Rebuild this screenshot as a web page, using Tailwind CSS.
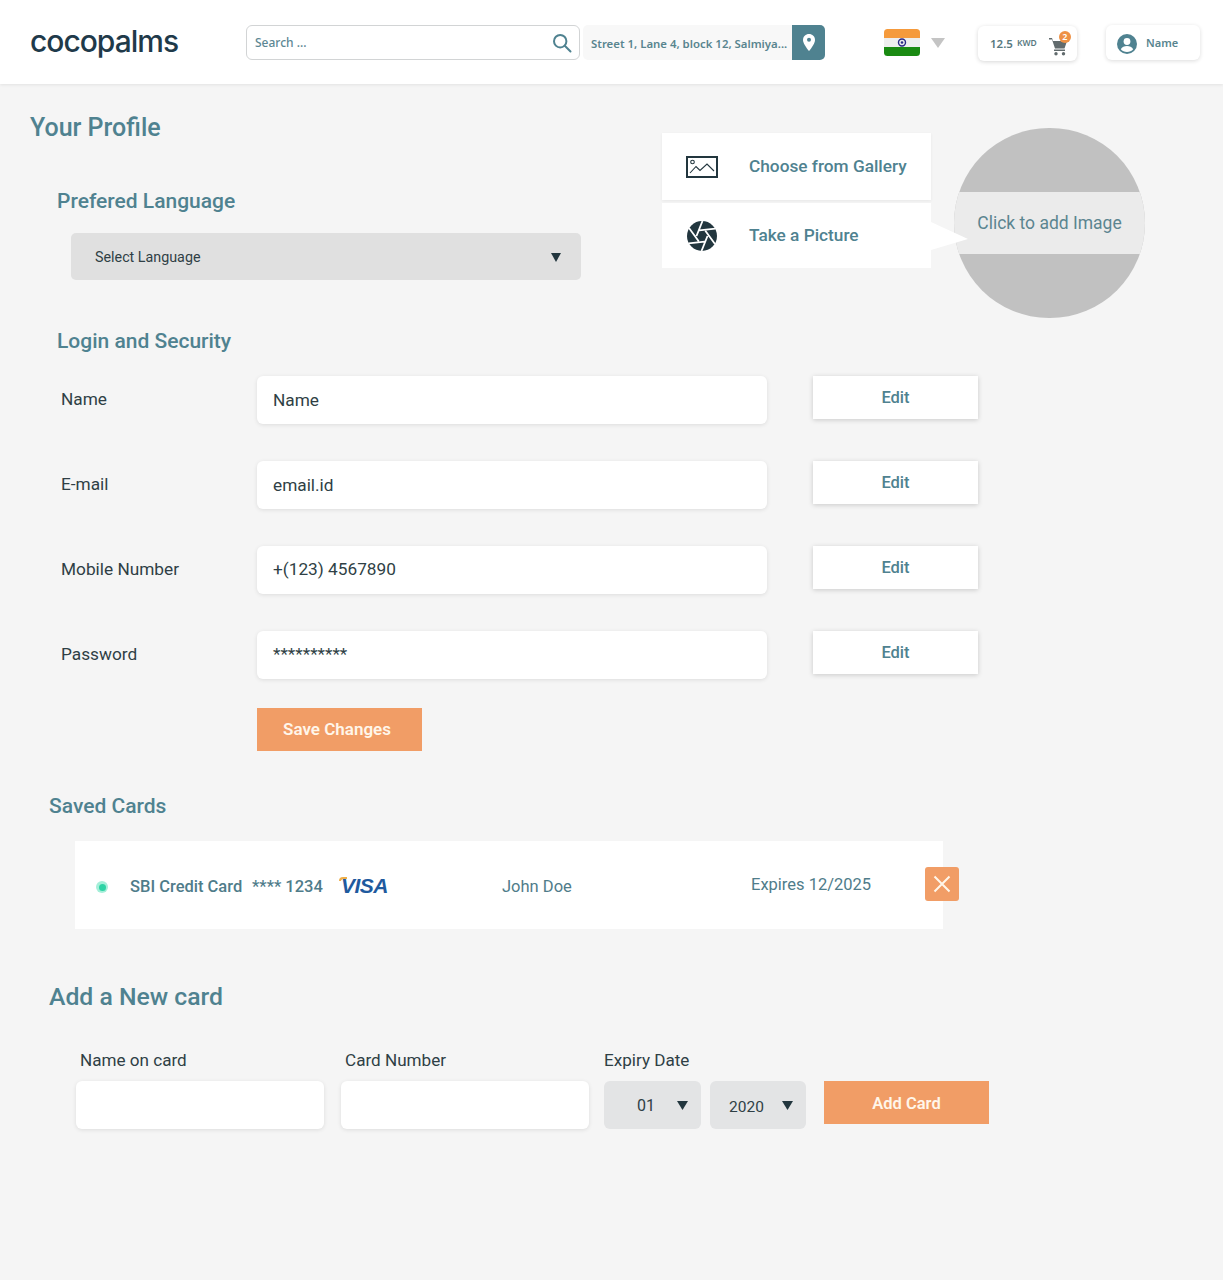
<!doctype html>
<html lang="en">
<head>
<meta charset="utf-8">
<title>Your Profile</title>
<script src="https://cdn.jsdelivr.net/npm/@tailwindcss/browser@4"></script>
</head>
<body class="bg-[#f5f5f5] font-['Roboto',sans-serif] text-[#2f3f45]">
<div class="relative h-[1280px] w-[1223px] overflow-hidden">

<header class="flex h-[84px] items-start bg-white pl-[30px] shadow-[0_1px_3px_rgba(0,0,0,0.08)]">
  <div class="mt-[23px] w-[216px] font-['Inter',sans-serif] text-[30px] leading-[36px] font-medium tracking-[-1px] text-[#1f3a4a]">cocopalms</div>
  <div class="mt-[25px] flex h-[35px] w-[334px] items-center justify-between rounded-[6px] border border-[#d2d4d5] bg-white pr-[7px] pl-2 font-['Noto_Sans',sans-serif] text-[12px] font-medium text-[#5d8794]">
    <span class="mt-[1px]">Search ...</span>
    <svg class="h-[20px] w-[20px]" viewBox="0 0 20 20" fill="none" stroke="#4f8290" stroke-width="2"><circle cx="8.200" cy="8.200" r="6.200"/><path d="M12.800 12.800 L18.500 18.500" stroke-linecap="round"/></svg>
  </div>
  <div class="mt-[25px] ml-[3px] flex h-[35px] w-[242px] overflow-hidden rounded-[5px] bg-[#f8f8f8]">
    <div class="flex w-[209px] items-center pt-[2px] pl-[8px] font-['Noto_Sans',sans-serif] text-[11.400px] font-semibold whitespace-nowrap text-[#58858f]">Street 1, Lane 4, block 12, Salmiya...</div>
    <div class="flex w-[33px] items-center justify-center bg-[#4f8290]">
      <svg class="h-[17px] w-[12px]" viewBox="0 0 12 17"><path fill="#fff" d="M6 0C2.700 0 0 2.600 0 5.900 0 10 6 17 6 17s6-7 6-11.100C12 2.600 9.300 0 6 0Z"/><circle cx="6" cy="5.800" r="2" fill="#4f8290"/></svg>
    </div>
  </div>
  <svg class="mt-[29px] ml-[59px] h-[27px] w-[36px]" viewBox="0 0 36 27">
    <defs><clipPath id="flagclip"><rect width="36" height="27" rx="3.500"/></clipPath></defs>
    <g clip-path="url(#flagclip)"><rect width="36" height="9" fill="#f59a3c"/><rect y="9" width="36" height="9" fill="#eeeeee"/><rect y="18" width="36" height="9" fill="#1a8a12"/></g>
    <circle cx="18" cy="13.500" r="3.500" fill="none" stroke="#2a2a86" stroke-width="1.400"/><circle cx="18" cy="13.500" r="1.300" fill="#2a2a86"/>
  </svg>
  <svg class="mt-[38px] ml-[11px] h-[10px] w-[14px]" viewBox="0 0 14 10"><path d="M0 0H14L7 10Z" fill="#c4c4c4"/></svg>
  <div class="mt-[26px] ml-[33px] flex h-[35px] w-[99px] items-center rounded-[6px] bg-white pl-[12px] font-['Noto_Sans',sans-serif] font-semibold text-[#58797f] shadow-[0_1px_4px_rgba(0,0,0,0.16)]">
    <span class="text-[11.500px]">12.5</span><span class="ml-[4px] text-[8.500px]">KWD</span>
    <div class="relative ml-[12px] h-[24px] w-[24px]">
      <svg class="absolute top-[5px] left-0 h-[19px] w-[19px]" viewBox="0 0 19 19" fill="#616b6d"><path d="M0 1h3l1 3h14l-2.500 7.500H6L3 2.500H0Z"/><rect x="5" y="12.500" width="11" height="1.500"/><circle cx="7" cy="16.800" r="1.700"/><circle cx="14.500" cy="16.800" r="1.700"/></svg>
      <span class="absolute top-[-1px] left-[10px] flex h-[12px] w-[12px] items-center justify-center rounded-full bg-[#ee9145] text-[9px] leading-none font-semibold text-white">2</span>
    </div>
  </div>
  <div class="mt-[25px] ml-[29px] flex h-[35px] w-[94px] items-center rounded-[6px] bg-white pt-[2px] pl-[11px] font-['Noto_Sans',sans-serif] text-[11px] font-semibold text-[#58858f] shadow-[0_1px_4px_rgba(0,0,0,0.14)]">
    <svg class="h-[20px] w-[20px]" viewBox="0 0 20 20"><circle cx="10" cy="10" r="10" fill="#4f8290"/><circle cx="10" cy="7.500" r="3.400" fill="#fff"/><path d="M3.800 15.300C5 12.900 7.400 12 10 12s5 .9 6.200 3.300C14.700 17 12.500 18 10 18s-4.700-1-6.200-2.700Z" fill="#fff"/></svg>
    <span class="ml-[9px]">Name</span>
  </div>
</header>

<main>
  <h1 class="mt-[29px] ml-[30px] text-[25px] leading-[30px] font-medium text-[#4f8290]">Your Profile</h1>
  <h2 class="mt-[45px] ml-[57px] text-[21px] leading-[26px] font-medium text-[#4f8290]">Prefered Language</h2>
  <div class="mt-[19px] ml-[71px] flex h-[47px] w-[510px] items-center justify-between rounded-[5px] bg-[#e0e0e0] pr-[20px] pl-[24px] text-[14.300px] text-[#2f3f45]">
    <span class="mt-[2px]">Select Language</span>
    <svg class="mt-[2px] h-[9px] w-[10px]" viewBox="0 0 10 9"><path d="M0 0H10L5 9Z" fill="#22363e"/></svg>
  </div>

  <h2 class="mt-[48px] ml-[57px] text-[21px] leading-[26px] font-medium text-[#4f8290]">Login and Security</h2>
  <div class="mt-[22px] ml-[61px] flex flex-col gap-[37px]">
    <div class="flex items-start">
      <div class="flex h-[48px] w-[196px] items-center text-[17.250px]">Name</div>
      <div class="flex h-[48px] w-[510px] items-center rounded-[6px] bg-white pt-[2px] pl-[16px] text-[17.250px] shadow-[0_1px_4px_rgba(0,0,0,0.1)]">Name</div>
      <div class="ml-[46px] flex h-[43px] w-[165px] items-center justify-center bg-white pt-[2px] text-[16.500px] font-medium text-[#4f8290] shadow-[0_1px_5px_rgba(0,0,0,0.18)]">Edit</div>
    </div>
    <div class="flex items-start">
      <div class="flex h-[48px] w-[196px] items-center text-[17.250px]">E-mail</div>
      <div class="flex h-[48px] w-[510px] items-center rounded-[6px] bg-white pt-[2px] pl-[16px] text-[17.250px] shadow-[0_1px_4px_rgba(0,0,0,0.1)]">email.id</div>
      <div class="ml-[46px] flex h-[43px] w-[165px] items-center justify-center bg-white pt-[2px] text-[16.500px] font-medium text-[#4f8290] shadow-[0_1px_5px_rgba(0,0,0,0.18)]">Edit</div>
    </div>
    <div class="flex items-start">
      <div class="flex h-[48px] w-[196px] items-center text-[17.250px]">Mobile Number</div>
      <div class="flex h-[48px] w-[510px] items-center rounded-[6px] bg-white pl-[16px] text-[17.250px] shadow-[0_1px_4px_rgba(0,0,0,0.1)]">+(123) 4567890</div>
      <div class="ml-[46px] flex h-[43px] w-[165px] items-center justify-center bg-white pt-[2px] text-[16.500px] font-medium text-[#4f8290] shadow-[0_1px_5px_rgba(0,0,0,0.18)]">Edit</div>
    </div>
    <div class="flex items-start">
      <div class="flex h-[48px] w-[196px] items-center text-[17.250px]">Password</div>
      <div class="flex h-[48px] w-[510px] items-start rounded-[6px] bg-white pt-[11px] pl-[16px] text-[17.250px] shadow-[0_1px_4px_rgba(0,0,0,0.1)]">**********</div>
      <div class="ml-[46px] flex h-[43px] w-[165px] items-center justify-center bg-white pt-[2px] text-[16.500px] font-medium text-[#4f8290] shadow-[0_1px_5px_rgba(0,0,0,0.18)]">Edit</div>
    </div>
  </div>
  <div class="mt-[29px] ml-[257px] flex h-[43px] w-[165px] items-center justify-center bg-[#f19d66] pr-[5px] text-[17px] font-semibold text-[#fff6ea]">Save Changes</div>

  <h2 class="mt-[42px] ml-[49px] text-[21px] leading-[26px] font-medium text-[#4f8290]">Saved Cards</h2>
  <div class="relative mt-[22px] ml-[75px] flex h-[88px] w-[868px] items-center bg-white pt-[4px] text-[#4f7c8a]">
    <div class="ml-[21px] flex h-[12px] w-[12px] items-center justify-center rounded-full bg-[#a5efd9]"><div class="h-[7px] w-[7px] rounded-full bg-[#2ed3a5]"></div></div>
    <span class="ml-[22px] w-[122px] text-[16.500px] font-medium whitespace-nowrap">SBI Credit Card</span>
    <span class="w-[81px] text-[16.500px] font-medium whitespace-nowrap">**** 1234</span>
    <span class="relative mt-[-4px] ml-[8px] w-[48px] font-['Liberation_Sans',sans-serif] text-[21px] leading-none font-bold tracking-[-0.5px] text-[#1f5a9e] italic">VISA<span class="absolute top-[2px] left-[-2px] h-[4px] w-[8px] rounded-tl-[5px] border-t-[2px] border-l-[2px] border-[#efaf4a]"></span></span>
    <span class="ml-[113px] w-[249px] text-[16.500px]">John Doe</span>
    <span class="mt-[-4px] text-[16.500px]">Expires 12/2025</span>
    <div class="absolute top-[26px] left-[850px] flex h-[34px] w-[34px] items-center justify-center rounded-[3px] bg-[#f19d66]">
      <svg class="h-[18px] w-[18px]" viewBox="0 0 18 18" stroke="#fff6ea" stroke-width="2" fill="none"><path d="M1.500 1.500 16.500 16.500M16.500 1.500 1.500 16.500"/></svg>
    </div>
  </div>

  <h2 class="mt-[53px] ml-[49px] text-[24.750px] leading-[30px] font-medium text-[#4f8290]">Add a New card</h2>
  <div class="mt-[38px] ml-[76px] flex items-start">
    <div class="w-[248px]">
      <div class="ml-[4px] text-[17.100px] leading-[21px]">Name on card</div>
      <div class="mt-[10px] h-[48px] rounded-[6px] bg-white shadow-[0_1px_4px_rgba(0,0,0,0.1)]"></div>
    </div>
    <div class="ml-[17px] w-[248px]">
      <div class="ml-[4px] text-[17.100px] leading-[21px]">Card Number</div>
      <div class="mt-[10px] h-[48px] rounded-[6px] bg-white shadow-[0_1px_4px_rgba(0,0,0,0.1)]"></div>
    </div>
    <div class="ml-[15px] w-[202px]">
      <div class="text-[17.100px] leading-[21px]">Expiry Date</div>
      <div class="mt-[10px] flex gap-[9px]">
        <div class="flex h-[48px] w-[97px] items-center justify-between rounded-[6px] bg-[#e3e4e5] pr-[13px] pl-[33px] text-[16px]"><span class="mt-[2px]">01</span><svg class="h-[9px] w-[11px]" viewBox="0 0 11 9"><path d="M0 0H11L5.500 9Z" fill="#22363e"/></svg></div>
        <div class="flex h-[48px] w-[96px] items-center justify-between rounded-[6px] bg-[#e3e4e5] pr-[13px] pl-[19px] text-[15.500px]"><span class="mt-[5px]">2020</span><svg class="h-[9px] w-[11px]" viewBox="0 0 11 9"><path d="M0 0H11L5.500 9Z" fill="#22363e"/></svg></div>
      </div>
    </div>
    <div class="mt-[31px] ml-[18px] flex h-[43px] w-[165px] items-center justify-center bg-[#f19d66] pt-[3px] text-[16.500px] font-semibold text-[#fff6ea]">Add Card</div>
  </div>
</main>

<!-- image picker floating over the page -->
<div class="absolute top-[128px] left-[954px] flex h-[190px] w-[191px] items-center overflow-hidden rounded-full bg-[#c1c1c1]">
  <div class="flex h-[62px] w-full items-center justify-center bg-[#ebebeb] text-[17.500px] text-[#5b8590]">Click to add Image</div>
</div>
<div class="absolute top-[133px] left-[662px] w-[269px] text-[17.250px] font-medium text-[#4f8290]">
  <div class="flex h-[67px] items-center bg-white shadow-[0_1px_3px_rgba(0,0,0,0.06)]">
    <svg class="ml-[24px] h-[22px] w-[32px]" viewBox="0 0 32 22" fill="none" stroke="#22363e"><rect x="1" y="1" width="30" height="20" stroke-width="2"/><circle cx="6.500" cy="6" r="1.800" stroke-width="1.100"/><path d="M4 17 10 10.500 14 14.500 21 8 28 15" stroke-width="1.100"/></svg>
    <span class="ml-[31px]">Choose from Gallery</span>
  </div>
  <div class="relative mt-[3px] flex h-[65px] items-center bg-white">
    <svg class="ml-[25px] h-[30px] w-[30px]" viewBox="0 0 30 30"><circle cx="15" cy="15" r="15" fill="#22363e"/><g stroke="#fff" stroke-width="1.800" fill="none"><path d="M9.500 15 15.500 0M12.300 9.300 28.400 7.600M18.300 9.800 28 23M20.500 15 14.500 30M17.700 20.700 1.600 22.400M11.700 20.200 2 7"/></g></svg>
    <span class="ml-[32px]">Take a Picture</span>
    <svg class="absolute top-[19px] left-[269px] h-[28px] w-[37px]" viewBox="0 0 37 28"><path d="M0 0 37 17 0 28Z" fill="#fff"/></svg>
  </div>
</div>

</div>
</body>
</html>
